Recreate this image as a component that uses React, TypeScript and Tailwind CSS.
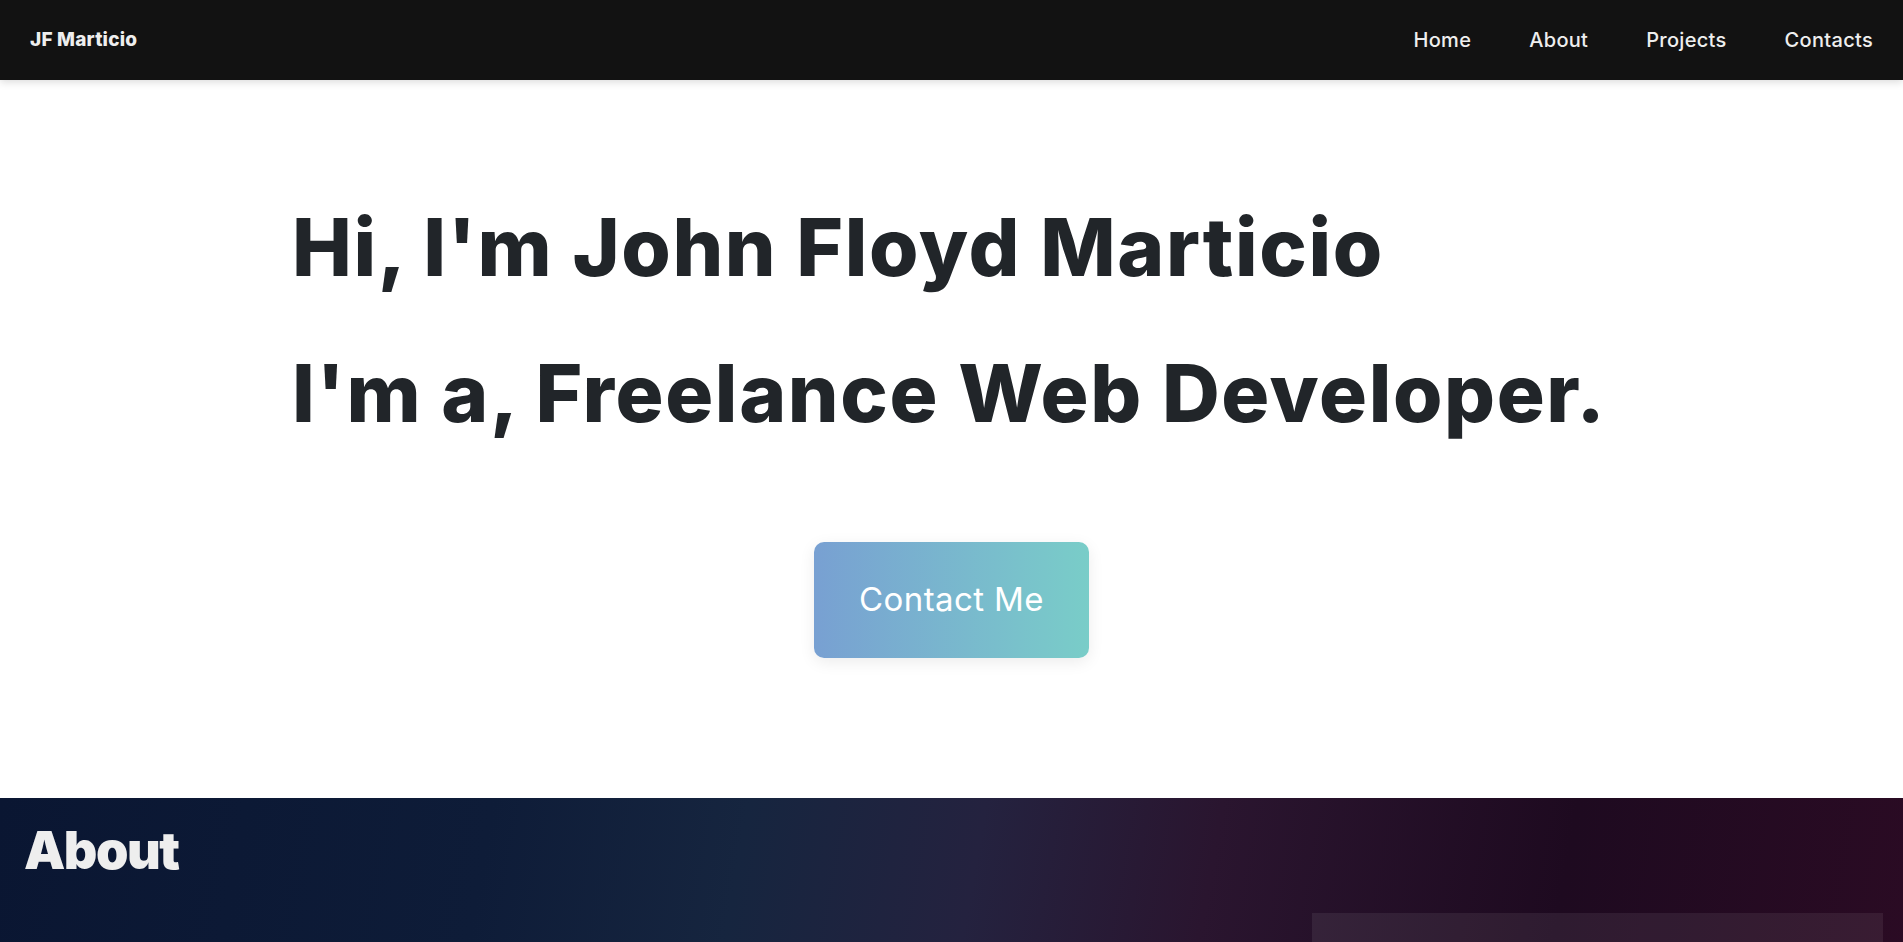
const font = { fontFamily: 'Inter, "Noto Sans", sans-serif' };

export default function App() {
  const links = ['Home', 'About', 'Projects', 'Contacts'];

  return (
    <div className="min-h-screen bg-white" style={font}>
      {/* Navbar */}
      <nav className="relative z-10 h-[80px] bg-[#121212] flex items-center justify-between shadow-[0_2px_8px_rgba(0,0,0,0.15)]">
        <a className="pl-[30px] text-[19px] font-extrabold text-[#eeeeee] tracking-[0.2px]">JF Marticio</a>
        <ul className="flex items-center pr-[1px]">
          {links.map((l) => (
            <li key={l} className="px-[29px] text-[20px] font-medium text-[#eeeeee] tracking-[0.3px]">
              {l}
            </li>
          ))}
        </ul>
      </nav>

      {/* Hero */}
      <section className="h-[718px] pt-[94px]">
        <div className="pl-[292px] text-[#212529]">
          <h1 className="text-[80px] font-extrabold leading-[146px] tracking-[1.6px]">Hi, I'm John Floyd Marticio</h1>
          <h1 className="text-[80px] font-extrabold leading-[146px] tracking-[1.6px]">I'm a, Freelance Web Developer.</h1>
        </div>
        <div className="flex justify-center mt-[76px]">
          <button className="w-[275px] h-[116px] rounded-[10px] bg-gradient-to-r from-[#78a0d2] to-[#79cdc8] text-white text-[33px] font-normal tracking-[0.4px] shadow-[0_4px_16px_rgba(0,0,0,0.08)]">
            Contact Me
          </button>
        </div>
      </section>

      {/* About */}
      <section className="relative h-[400px] bg-[linear-gradient(100deg,#0a1632_0%,#0e1c38_25%,#16253f_38%,#24223f_50%,#2a152f_62%,#1e0a20_80%,#2c0b24_100%)] overflow-hidden">
        <div className="relative flex justify-between">
          <h2 className="pl-[24px] pt-[14px] text-[52px] font-black text-[#eeeeee] tracking-[-1.5px]">About</h2>
          <div className="mt-[115px] mr-[20px] w-[571px] h-[300px] bg-white/[0.07]" />
        </div>
      </section>
    </div>
  );
}
